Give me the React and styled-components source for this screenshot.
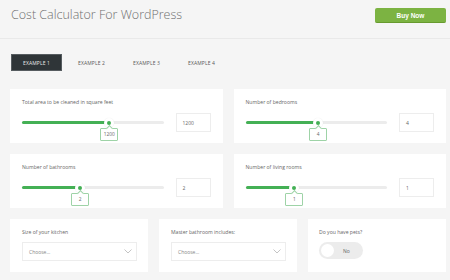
import React from "react";
import styled, { createGlobalStyle } from "styled-components";

const GlobalStyle = createGlobalStyle`
  html, body {
    margin: 0;
    padding: 0;
    background: #f5f5f5;
    font-family: "Open Sans", "Liberation Sans", sans-serif;
  }
`;

const Page = styled.div`
  width: 450px;
  height: 280px;
  overflow: hidden;
  background: #f5f5f5;
`;

const Header = styled.header`
  height: 39px;
  box-sizing: border-box;
  display: flex;
  justify-content: space-between;
  align-items: flex-start;
  padding: 7px 4px 0 11px;
  border-bottom: 1px solid #e9e9e9;
`;

const Title = styled.h1`
  margin: 0;
  font-size: 12.5px;
  line-height: 16px;
  font-weight: 300;
  color: #707070;
`;

const BuyButton = styled.button`
  width: 71px;
  height: 15px;
  margin-top: 1px;
  padding: 0;
  border: none;
  border-bottom: 1px solid #679a2f;
  border-radius: 2px;
  background: #7cb342;
  color: #fff;
  font-family: "Liberation Sans", Arial, sans-serif;
  font-weight: 700;
  font-size: 6.5px;
`;

const Tabs = styled.nav`
  display: flex;
  gap: 4px;
  padding: 15px 0 0 11px;
  height: 50px;
  box-sizing: border-box;
`;

const Tab = styled.div`
  width: 51px;
  height: 17px;
  box-sizing: border-box;
  display: flex;
  align-items: center;
  justify-content: center;
  font-size: 5px;
  letter-spacing: 0.1px;
  color: ${(p) => (p.$active ? "#e8e8e8" : "#5a5a5a")};
  background: ${(p) => (p.$active ? "#2f3538" : "transparent")};
  border: 1px solid ${(p) => (p.$active ? "#565c60" : "transparent")};
`;

const Grid = styled.div`
  display: grid;
  grid-template-columns: ${(p) => `repeat(${p.$cols}, 1fr)`};
  gap: 11px;
  padding: 0 4px 0 10px;
  margin-bottom: 11px;
`;

const Card = styled.div`
  background: #fff;
  height: ${(p) => p.$h || 54}px;
  box-sizing: border-box;
  padding: 9px ${(p) => p.$pr || 12}px 0 ${(p) => p.$pl || 12}px;
`;

const Label = styled.div`
  font-size: 5.1px;
  line-height: 8px;
  color: #666;
  margin-bottom: ${(p) => p.$mb || 7}px;
`;

const Row = styled.div`
  display: flex;
  align-items: center;
  gap: 12px;
  height: 19px;
`;

const Track = styled.div`
  position: relative;
  flex: 1;
  height: 3px;
  border-radius: 2px;
  background: #ececec;
`;

const Fill = styled.div`
  height: 100%;
  border-radius: 2px;
  background: #44b055;
`;

const Thumb = styled.div`
  position: absolute;
  top: 50%;
  width: 10px;
  height: 10px;
  margin: -5px 0 0 -5px;
  border-radius: 50%;
  background: #fff;
  box-shadow: 0 0 1px rgba(0, 0, 0, 0.1);
  display: flex;
  align-items: center;
  justify-content: center;

  &::after {
    content: "";
    width: 4px;
    height: 4px;
    border-radius: 50%;
    background: #44b055;
  }
`;

const Bubble = styled.div`
  position: absolute;
  top: 10px;
  left: 50%;
  transform: translateX(-50%);
  min-width: 18px;
  height: 13px;
  box-sizing: border-box;
  padding: 0 2px;
  border: 1px solid #9ed3a7;
  border-radius: 1px;
  background: #fff;
  font-size: 4.8px;
  color: #666;
  display: flex;
  align-items: center;
  justify-content: center;

  &::before {
    content: "";
    position: absolute;
    top: -3px;
    left: 50%;
    width: 4px;
    height: 4px;
    margin-left: -2.5px;
    background: #fff;
    border-left: 1px solid #9ed3a7;
    border-top: 1px solid #9ed3a7;
    transform: rotate(45deg);
  }
`;

const ValueBox = styled.div`
  width: 35px;
  height: 19px;
  box-sizing: border-box;
  border: 1px solid #ededed;
  padding-left: 6px;
  display: flex;
  align-items: center;
  font-size: 5px;
  color: #666;
`;

const Select = styled.div`
  height: 19px;
  box-sizing: border-box;
  border: 1px solid #ededed;
  padding: 0 4px 0 6px;
  display: flex;
  align-items: center;
  justify-content: space-between;
  font-size: 5px;
  color: #888;
`;

const Toggle = styled.div`
  width: 44px;
  height: 17px;
  box-sizing: border-box;
  border-radius: 9px;
  background: #ececec;
  display: flex;
  align-items: center;
  padding-left: 2px;
  gap: 9px;
  font-size: 5px;
  color: #666;

  &::before {
    content: "";
    width: 13px;
    height: 13px;
    border-radius: 50%;
    background: #fff;
  }
`;

function Slider({ label, value, pct }) {
  return (
    <Card>
      <Label>{label}</Label>
      <Row>
        <Track>
          <Fill style={{ width: `${pct}%` }} />
          <Thumb style={{ left: `${pct}%` }}>
            <Bubble>{value}</Bubble>
          </Thumb>
        </Track>
        <ValueBox>{value}</ValueBox>
      </Row>
    </Card>
  );
}

function Chevron() {
  return (
    <svg width="8" height="5" viewBox="0 0 8 5">
      <path d="M0.5 0.5 L4 4 L7.5 0.5" fill="none" stroke="#aaa" strokeWidth="0.7" />
    </svg>
  );
}

export default function App() {
  return (
    <Page>
      <GlobalStyle />
      <Header>
        <Title>Cost Calculator For WordPress</Title>
        <BuyButton>Buy Now</BuyButton>
      </Header>
      <Tabs>
        <Tab $active>EXAMPLE 1</Tab>
        <Tab>EXAMPLE 2</Tab>
        <Tab>EXAMPLE 3</Tab>
        <Tab>EXAMPLE 4</Tab>
      </Tabs>
      <Grid $cols={2}>
        <Slider label="Total area to be cleaned in square feet" value="1200" pct={61.7} />
        <Slider label="Number of bedrooms" value="4" pct={51.4} />
      </Grid>
      <Grid $cols={2}>
        <Slider label="Number of bathrooms" value="2" pct={41} />
        <Slider label="Number of living rooms" value="1" pct={34.5} />
      </Grid>
      <Grid $cols={3}>
        <Card $h={53} $pr={11}>
          <Label $mb={6}>Size of your kitchen</Label>
          <Select>
            Choose...
            <Chevron />
          </Select>
        </Card>
        <Card $h={53} $pr={11}>
          <Label $mb={6}>Master bathroom includes:</Label>
          <Select>
            Choose...
            <Chevron />
          </Select>
        </Card>
        <Card $h={53} $pl={11}>
          <Label $mb={6}>Do you have pets?</Label>
          <Toggle>No</Toggle>
        </Card>
      </Grid>
    </Page>
  );
}
